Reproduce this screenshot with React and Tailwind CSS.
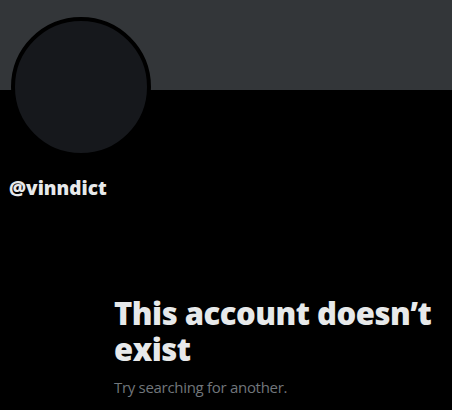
export default function App() {
  return (
    <div className="w-[452px] h-[410px] overflow-hidden bg-black font-['Open_Sans',sans-serif] text-[#e7e9ea]">
      {/* Banner */}
      <div className="h-[90px] bg-[#333639]" />

      {/* Avatar */}
      <div className="-mt-[73px] ml-[11px] w-[140px] h-[140px] rounded-full border-4 border-black bg-[#16181c]" />

      {/* Handle */}
      <div className="mt-[20px] ml-[9px] text-[19px] leading-[22px] font-extrabold">@vinndict</div>

      {/* Empty state */}
      <div className="mt-[96px] ml-[114px] pr-2">
        <h2 className="text-[31px] leading-[36px] font-extrabold tracking-[-0.5px]">This account doesn’t exist</h2>
        <p className="mt-[10px] text-[15px] leading-[20px] tracking-[-0.3px] text-[#71767b]">Try searching for another.</p>
      </div>
    </div>
  )
}
